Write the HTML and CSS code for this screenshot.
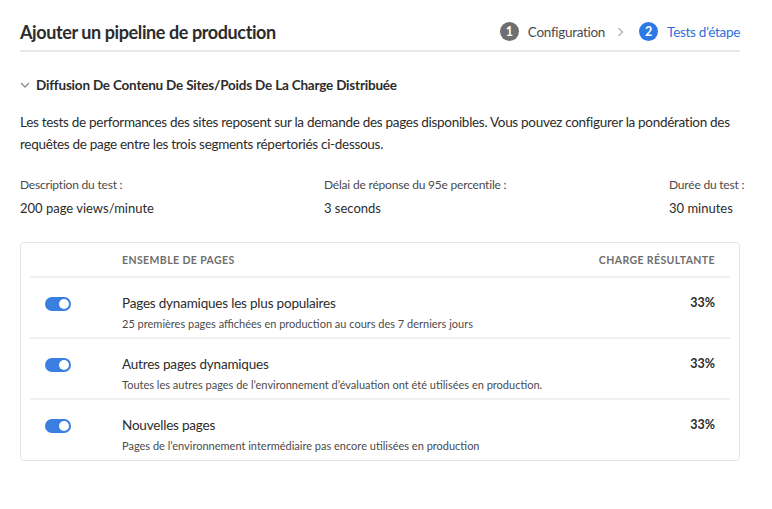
FILE: index.html
```html
<!DOCTYPE html>
<html lang="fr">
<head>
<meta charset="utf-8">
<title>Ajouter un pipeline de production</title>
<link rel="stylesheet" href="styles.css">
</head>
<body>
<div class="page">
  <header class="top">
    <h1 class="title">Ajouter un pipeline de production</h1>
    <nav class="steps">
      <span class="step done"><span class="num">1</span><span class="label">Configuration</span></span>
      <svg class="sep" width="8" height="10" viewBox="0 0 8 10"><path d="M2 1.5 L5.5 5 L2 8.5" fill="none" stroke="#b8b8b8" stroke-width="1.5" stroke-linecap="round" stroke-linejoin="round"/></svg>
      <span class="step current"><span class="num">2</span><span class="label">Tests d’étape</span></span>
    </nav>
  </header>

  <div class="section-head">
    <svg class="chev" width="10" height="8" viewBox="0 0 10 8"><path d="M1.5 2.5 L5 6 L8.5 2.5" fill="none" stroke="#8a8a8a" stroke-width="1.4" stroke-linecap="round" stroke-linejoin="round"/></svg>
    <h2>Diffusion De Contenu De Sites/Poids De La Charge Distribuée</h2>
  </div>

  <p class="intro">Les tests de performances des sites reposent sur la demande des pages disponibles. Vous pouvez configurer la pondération des requêtes de page entre les trois segments répertoriés ci-dessous.</p>

  <div class="metrics">
    <div class="metric">
      <div class="m-label">Description du test :</div>
      <div class="m-value">200 page views/minute</div>
    </div>
    <div class="metric">
      <div class="m-label">Délai de réponse du 95e percentile :</div>
      <div class="m-value">3 seconds</div>
    </div>
    <div class="metric">
      <div class="m-label">Durée du test :</div>
      <div class="m-value">30 minutes</div>
    </div>
  </div>

  <div class="card">
    <div class="row head">
      <div class="c-toggle"></div>
      <div class="c-name">ENSEMBLE DE PAGES</div>
      <div class="c-load">CHARGE RÉSULTANTE</div>
    </div>
    <div class="row">
      <div class="c-toggle"><span class="toggle"></span></div>
      <div class="c-name">
        <div class="r-title">Pages dynamiques les plus populaires</div>
        <div class="r-sub">25 premières pages affichées en production au cours des 7 derniers jours</div>
      </div>
      <div class="c-load pct">33%</div>
    </div>
    <div class="row">
      <div class="c-toggle"><span class="toggle"></span></div>
      <div class="c-name">
        <div class="r-title">Autres pages dynamiques</div>
        <div class="r-sub">Toutes les autres pages de l’environnement d’évaluation ont été utilisées en production.</div>
      </div>
      <div class="c-load pct">33%</div>
    </div>
    <div class="row last">
      <div class="c-toggle"><span class="toggle"></span></div>
      <div class="c-name">
        <div class="r-title">Nouvelles pages</div>
        <div class="r-sub">Pages de l’environnement intermédiaire pas encore utilisées en production</div>
      </div>
      <div class="c-load pct">33%</div>
    </div>
  </div>
</div>
</body>
</html>
```

FILE: styles.css
```css
* { box-sizing: border-box; }
html, body { margin: 0; padding: 0; background: #fff; }
body {
  font-family: "Lato", "Open Sans", sans-serif;
  color: #2c2c2c;
}
.page {
  width: 720px;
  margin-left: 20px;
  padding-top: 15px;
}
.top {
  display: flex;
  align-items: center;
  justify-content: space-between;
  height: 37px;
  padding-bottom: 2px;
  border-bottom: 2px solid #e8e8e8;
}
.title {
  margin: 0;
  font-size: 18px;
  font-weight: 700;
  color: #2c2c2c;
  letter-spacing: -0.4px;
}
.steps {
  display: flex;
  align-items: center;
  font-size: 13.5px;
  letter-spacing: -0.3px;
}
.step { display: flex; align-items: center; }
.num {
  width: 19px; height: 19px;
  border-radius: 50%;
  color: #fff;
  font-size: 12.5px;
  font-weight: 700;
  letter-spacing: 0;
  display: flex; align-items: center; justify-content: center;
  margin-right: 9px;
}
.done .num { background: #6e6e6e; }
.done .label { color: #4b4b4b; }
.current .num { background: #2c78e4; }
.current .label { color: #2c6fdc; }
.sep { margin: 0 14px 0 12px; }

.section-head {
  display: flex;
  align-items: center;
  margin-top: 23px;
  height: 20px;
}
.chev { margin-right: 6px; }
.section-head h2 {
  margin: 0;
  font-size: 13.5px;
  font-weight: 700;
  color: #2c2c2c;
  letter-spacing: -0.2px;
}
.intro {
  margin: 16px 0 0;
  font-size: 13.5px;
  line-height: 22px;
  letter-spacing: -0.3px;
  color: #2c2c2c;
}
.metrics {
  display: grid;
  grid-template-columns: 304px 345px 1fr;
  margin-top: 22px;
}
.m-label {
  font-size: 12px;
  color: #4b4b4b;
  line-height: 16px;
  white-space: nowrap;
  letter-spacing: -0.2px;
}
.m-value {
  font-size: 13px;
  color: #2c2c2c;
  line-height: 20px;
  margin-top: 5px;
  white-space: nowrap;
}
.card {
  margin-top: 24px;
  border: 1px solid #e4e4e4;
  border-radius: 4px;
  padding: 0 9px;
}
.row {
  display: flex;
  align-items: flex-start;
  height: 61px;
  border-bottom: 2px solid #f0f0f0;
  padding-top: 16px;
}
.row.last { border-bottom: 0; height: 60px; }
.row.head {
  height: 35px;
  align-items: center;
  padding-top: 0;
  font-size: 10.5px;
  font-weight: 700;
  color: #6e6e6e;
  letter-spacing: 0.4px;
}
.c-toggle { width: 92px; flex: none; padding-left: 15px; }
.c-name { flex: 1; }
.c-load { width: 160px; flex: none; text-align: right; padding-right: 15px; }
.toggle {
  display: block;
  width: 26px; height: 14px;
  border-radius: 7px;
  background: #3a7ee2;
  position: relative;
  margin-top: 3px;
}
.toggle::after {
  content: "";
  position: absolute;
  right: 2px; top: 2px;
  width: 10px; height: 10px;
  border-radius: 50%;
  background: #fff;
}
.r-title { font-size: 13.5px; line-height: 18px; color: #2c2c2c; letter-spacing: -0.2px; }
.r-sub { font-size: 11px; line-height: 16px; color: #4b4b4b; margin-top: 4px; }
.pct { font-size: 12.5px; font-weight: 700; color: #2c2c2c; line-height: 18px; }
```
